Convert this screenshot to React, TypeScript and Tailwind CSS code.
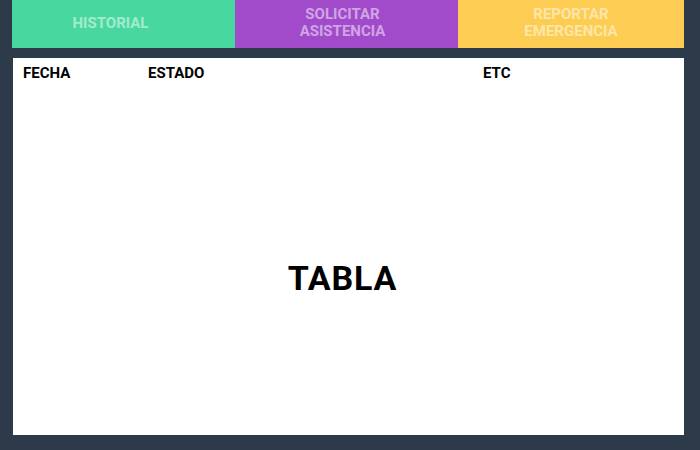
export default function App() {
  return (
    <div
      className="w-[700px] h-[450px] bg-[#2d3a4a] pl-3 pr-4 flex flex-col"
      style={{ fontFamily: "Roboto, 'Liberation Sans', sans-serif" }}
    >
      <nav className="grid grid-cols-[223px_223px_1fr] h-12 text-[15px] font-bold leading-[17px] text-white/50 text-center">
        <button className="bg-[#48d89f] flex items-center justify-center pr-[26px] pb-[2px]">HISTORIAL</button>
        <button className="bg-[#a14bcb] flex items-center justify-center pr-[8px] pb-[2px]">
          SOLICITAR
          <br />
          ASISTENCIA
        </button>
        <button className="bg-[#fccd52] flex items-center justify-center pb-[2px]">
          REPORTAR
          <br />
          EMERGENCIA
        </button>
      </nav>

      <section className="mt-[10px] ml-px h-[377px] bg-white flex flex-col">
        <div className="grid grid-cols-[125px_335px_1fr] pl-[10px] pt-[4px] text-[15px] font-bold text-black">
          <span>FECHA</span>
          <span>ESTADO</span>
          <span>ETC</span>
        </div>
        <div className="flex-1 flex items-center justify-center pt-[38px] pr-[12px]">
          <h1 className="text-[34px] font-bold tracking-wide text-black">TABLA</h1>
        </div>
      </section>
    </div>
  );
}
